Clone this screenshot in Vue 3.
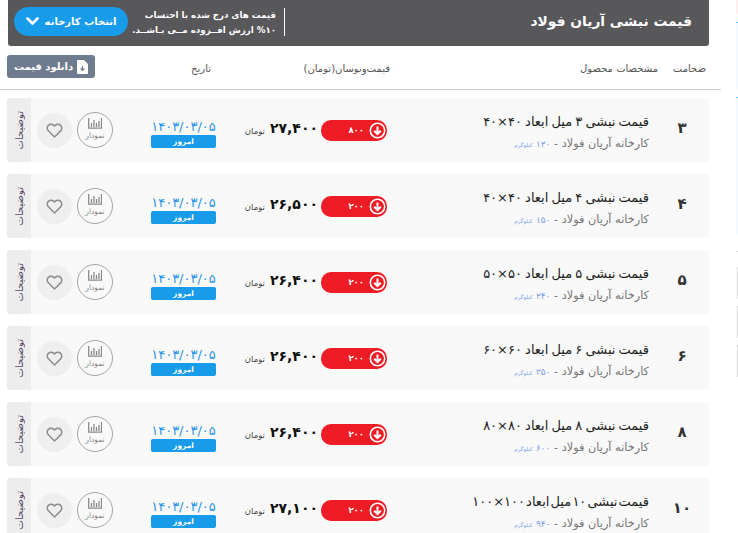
<script setup>
const rows = [
  { t: '۳', title: 'قیمت نبشی ۳ میل ابعاد ۴۰×۴۰', w: '۱۲۰', price: '۲۷,۴۰۰', diff: '۸۰۰' },
  { t: '۴', title: 'قیمت نبشی ۴ میل ابعاد ۴۰×۴۰', w: '۱۵۰', price: '۲۶,۵۰۰', diff: '۲۰۰' },
  { t: '۵', title: 'قیمت نبشی ۵ میل ابعاد ۵۰×۵۰', w: '۲۴۰', price: '۲۶,۴۰۰', diff: '۲۰۰' },
  { t: '۶', title: 'قیمت نبشی ۶ میل ابعاد ۶۰×۶۰', w: '۳۵۰', price: '۲۶,۴۰۰', diff: '۲۰۰' },
  { t: '۸', title: 'قیمت نبشی ۸ میل ابعاد ۸۰×۸۰', w: '۶۰۰', price: '۲۶,۴۰۰', diff: '۲۰۰' },
  { t: '۱۰', title: 'قیمت نبشی ۱۰ میل ابعاد ۱۰۰×۱۰۰', w: '۹۴۰', price: '۲۷,۱۰۰', diff: '۲۰۰', tight: true }
]
</script>

<template>
  <div class="page" dir="rtl">
    <aside class="edge">
      <i class="e-pink"></i>
      <i class="e-blue e-a"></i>
      <i class="e-blue e-b"></i>
      <i class="e-line"></i>
      <i class="e-gray"></i>
      <i class="e-gray"></i>
      <i class="e-gray"></i>
    </aside>
    <main class="main">
      <header class="banner">
        <h1 class="banner-title">قیمت نبشی آریان فولاد</h1>
        <div class="banner-side">
          <p class="banner-note">قیمت های درج شده با احتساب<br />۱۰&rlm;% ارزش افــزوده مــی بـاشــد.</p>
          <button class="factory-btn">
            <span>انتخاب کارخانه</span>
            <svg width="13" height="9" viewBox="0 0 13 9"><path d="M1.500 1.500 6.500 6.500 11.500 1.500" fill="none" stroke="#fff" stroke-width="2.600" stroke-linecap="round" stroke-linejoin="round" /></svg>
          </button>
        </div>
      </header>

      <div class="heading">
        <span class="h-thick">ضخامت</span>
        <span class="h-spec">مشخصات محصول</span>
        <span class="h-price">قیمت‌ونوسان(تومان)</span>
        <span class="h-date">تاریخ</span>
        <button class="download">
          <svg width="11" height="14" viewBox="0 0 11 14"><path d="M0 1a1 1 0 0 1 1-1h6l4 4v9a1 1 0 0 1-1 1H1a1 1 0 0 1-1-1z" fill="#fff" /><path d="M5.500 6v4M3.600 8.400l1.900 2 1.900-2" fill="none" stroke="#6f7b8f" stroke-width="1.200" /></svg>
          <span>دانلود قیمت</span>
        </button>
      </div>

      <section class="list">
        <article v-for="r in rows" :key="r.t" class="row">
          <div class="thick">{{ r.t }}</div>
          <div class="spec">
            <div class="spec-title" :class="{ tight: r.tight }">{{ r.title }}</div>
            <div class="spec-sub">کارخانه آریان فولاد - <span class="weight">{{ r.w }}</span> <span class="weight unit">کیلوگرم</span></div>
          </div>
          <div class="pill">
            <svg width="17" height="17" viewBox="0 0 17 17"><circle cx="8.500" cy="8.500" r="7.200" fill="none" stroke="#fff" stroke-width="1.600" /><path d="M8.500 4.500v7.500M5.200 8.700l3.300 3.300 3.300-3.300" fill="none" stroke="#fff" stroke-width="2" /></svg>
            <span>{{ r.diff }}</span>
          </div>
          <div class="price">
            <b>{{ r.price }}</b>
            <small>تومان</small>
          </div>
          <div class="date">
            <div class="date-num">۱۴۰۳/۰۳/۰۵</div>
            <div class="today">امروز</div>
          </div>
          <div class="chart">
            <svg width="14" height="11" viewBox="0 0 14 11"><path d="M.7 0v10.200h12.800V0M3.500 5v4M6 2v7M8.500 5v4M11 3v6" fill="none" stroke="#8a8a8a" stroke-width="1.300" /></svg>
            <span>نمودار</span>
          </div>
          <div class="heart">
            <svg width="17" height="15" viewBox="0 0 24 22"><path d="M12 20.500 3 11.500a5.600 5.600 0 0 1 0-8 5.600 5.600 0 0 1 8 0l1 1 1-1a5.600 5.600 0 0 1 8 0 5.600 5.600 0 0 1 0 8z" fill="none" stroke="#8d8d8d" stroke-width="2.200" stroke-linejoin="round" /></svg>
          </div>
          <div class="tag"><span>توضیحات</span></div>
        </article>
      </section>
    </main>
  </div>
</template>

<style>
html, body { margin: 0; background: #fff; overflow: hidden; }
</style>

<style scoped>
.page {
  width: 738px;
  height: 533px;
  overflow: hidden;
  display: flex;
  font-family: "DejaVu Sans", sans-serif;
  color: #222;
}
.edge { width: 2px; flex: none; display: flex; flex-direction: column; }
.edge i { display: block; box-sizing: border-box; }
.e-pink { height: 14px; background: #fdeef0; margin-bottom: 8px; }
.e-blue { background: #f3f9ff; border-top: 1px solid #6cc0f2; }
.e-a { height: 67px; margin-bottom: 8px; }
.e-b { height: 138px; margin-bottom: 16px; }
.e-line { height: 1px; background: #e2e2e2; margin-bottom: 15px; }
.e-gray { height: 32px; background: #fafafa; border-right: 1px solid #e0e0e0; margin-bottom: 7px; }
.main { flex: none; width: 736px; }
.banner {
  width: 701px;
  height: 46px;
  margin-right: 27px;
  box-sizing: border-box;
  padding: 0 17px 3px 0;
  display: flex;
  justify-content: space-between;
  align-items: center;
  background: #58575a;
  border-radius: 0 0 3px 3px;
  color: #fff;
}
.banner-title { margin: 0 0 2px; font-size: 13.800px; font-weight: 700; white-space: nowrap; }
.banner-side { display: flex; align-items: center; gap: 18px; padding-left: 6px; }
.banner-note {
  margin: 0;
  padding-right: 8px;
  border-right: 1px solid #fff;
  font-size: 8.700px;
  font-weight: 700;
  line-height: 15px;
  height: 28px;
  width: 130px;
  white-space: nowrap;
  text-align: right;
}
.factory-btn {
  width: 114px;
  height: 29px;
  display: flex;
  align-items: center;
  justify-content: center;
  gap: 6px;
  border: 0;
  border-radius: 15px;
  background: #189cea;
  color: #fff;
  font: 700 10px "DejaVu Sans", sans-serif;
  padding: 0;
}
.heading {
  height: 41px;
  padding-top: 2px;
  width: 721px;
  margin-right: 15px;
  display: flex;
  align-items: center;
  border-bottom: 1px solid #cfcfcf;
  font-size: 10px;
  color: #555;
}
.h-thick { margin-right: 15px; width: 48px; flex: none; }
.h-spec { width: 268px; flex: none; }
.h-price { width: 179px; flex: none; }
.h-date { width: 116px; flex: none; }
.download {
  flex: none;
  margin-bottom: 4px;
  width: 88px;
  height: 23px;
  display: flex;
  align-items: center;
  justify-content: center;
  gap: 4px;
  border: 0;
  border-radius: 3px;
  background: #6f7b8f;
  color: #fff;
  font: 700 10px "DejaVu Sans", sans-serif;
  padding: 0;
}
.list { display: flex; flex-direction: column; gap: 12px; margin-top: 8px; margin-right: 27px; }
.row {
  flex: none;
  width: 702px;
  height: 64px;
  display: grid;
  grid-template-columns: 60px 262px 66px 105px 65px 38px 36px 5px 35px 6px 24px;
  align-items: center;
  background: #f9f9f9;
  border-radius: 3px;
  overflow: hidden;
}
.thick { font-size: 15px; font-weight: 700; text-align: center; padding: 0 0 5px 6px; color: #333; }
.spec { min-width: 0; white-space: nowrap; padding-top: 6px; }
.spec-title { font-size: 13px; line-height: 15px; color: #222; margin-bottom: 8px; word-spacing: -1px; }
.spec-title.tight { word-spacing: -3px; }
.spec-sub { font-size: 11.300px; line-height: 14px; color: #777; }
.weight { color: #7b9cf0; font-size: 9px; }
.unit { font-size: 5.500px; }
.pill {
  height: 21px;
  display: flex;
  align-items: center;
  gap: 5px;
  padding-right: 1px;
  border-radius: 10px;
  background: #ee1c25;
  color: #fff;
  font-size: 8.500px;
  font-weight: 700;
  box-sizing: border-box;
}
.price { display: flex; align-items: center; gap: 5px; padding-right: 3px; white-space: nowrap; }
.price b { font-size: 14px; color: #111; margin-bottom: 4px; }
.price small { font-size: 8.500px; color: #444; margin-top: 2px; }
.date { grid-column: 5; text-align: center; padding-top: 8px; }
.date-num { font-size: 13px; color: #2a96e8; white-space: nowrap; line-height: 13px; margin-bottom: 2px; direction: ltr; }
.today {
  height: 13px;
  background: #189cea;
  border-radius: 2px;
  color: #fff;
  font-size: 7.500px;
  font-weight: 700;
  line-height: 13px;
}
.chart {
  grid-column: 7;
  height: 36px;
  box-sizing: border-box;
  padding-top: 5px;
  display: flex;
  flex-direction: column;
  align-items: center;
  gap: 2px;
  border: 1px solid #a5a5a5;
  border-radius: 50%;
  font-size: 7.500px;
  color: #888;
}
.heart {
  grid-column: 9;
  height: 35px;
  display: flex;
  align-items: center;
  justify-content: center;
  border-radius: 50%;
  background: #efefef;
}
.tag {
  grid-column: 11;
  align-self: stretch;
  display: flex;
  align-items: center;
  justify-content: center;
  background: #ededed;
}
.tag span { writing-mode: vertical-rl; transform: rotate(180deg); font-size: 10px; color: #5a4a6a; white-space: nowrap; }
</style>
